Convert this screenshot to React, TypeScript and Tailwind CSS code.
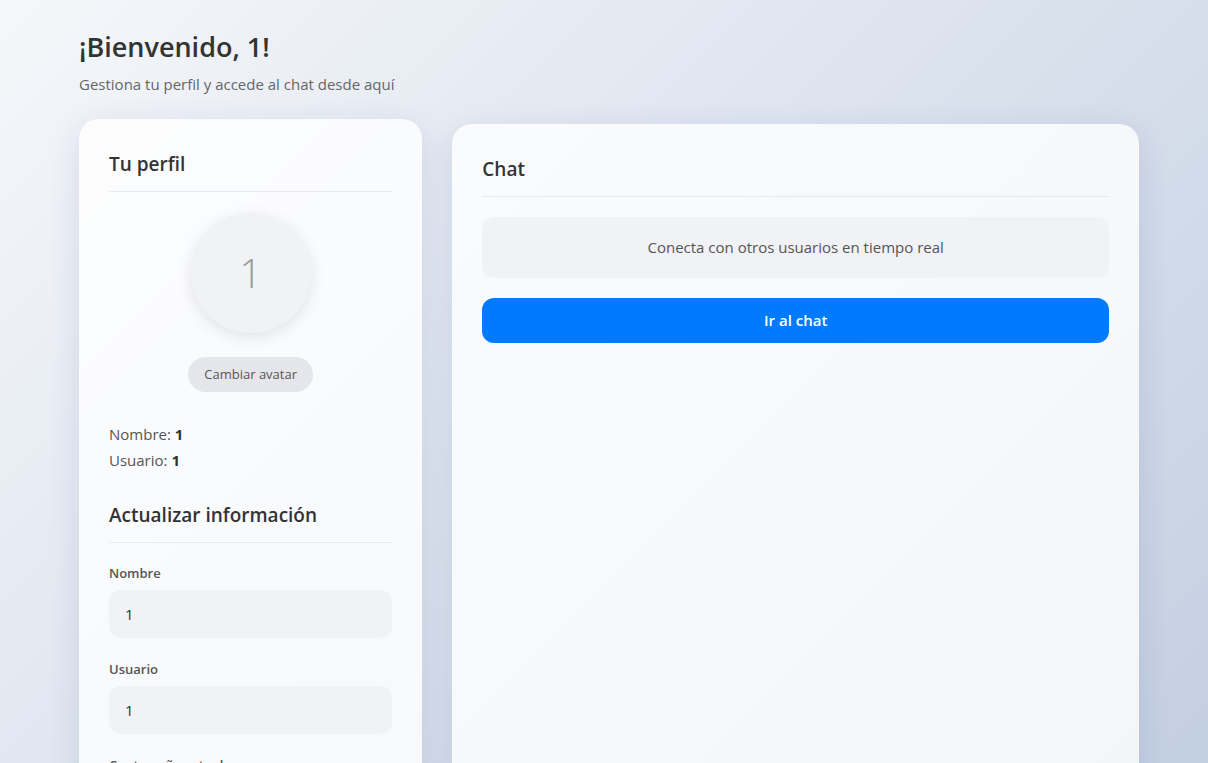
import React, { useState } from 'react';

const font = { fontFamily: '"Open Sans", "Noto Sans", sans-serif' };

function ProfileCard() {
  const [name, setName] = useState('1');
  const [user, setUser] = useState('1');

  return (
    <div className="-translate-y-[5px] rounded-[20px] bg-white/80 p-[30px] shadow-[0_8px_32px_rgba(31,38,135,0.12)]">
      <h2 className="border-b border-[#e8eaee] pb-[13px] pt-[1px] text-[19px] font-semibold leading-[28px] text-[#333]">Tu perfil</h2>

      {/* avatar */}
      <div className="mt-[21px] flex flex-col items-center">
        <div className="flex h-[120px] w-[120px] items-center justify-center rounded-full bg-[#f1f2f4] shadow-[0_4px_15px_rgba(0,0,0,0.1)]">
          <span className="text-[40px] font-light text-[#9a9a9a]">1</span>
        </div>
        <button className="mt-[24px] h-[35px] rounded-full bg-[#e4e6eb] px-[16px] text-[13px] text-[#555]">
          Cambiar avatar
        </button>
      </div>

      <div className="mt-[32px] space-y-[6px] text-[15px] leading-[20px] text-[#555]">
        <p>Nombre: <strong className="font-bold text-[#333]">1</strong></p>
        <p>Usuario: <strong className="font-bold text-[#333]">1</strong></p>
      </div>

      <h2 className="mt-[31px] border-b border-[#e8eaee] pb-[13px] text-[19px] font-semibold leading-[28px] text-[#333]">
        Actualizar información
      </h2>

      <div className="mt-[21px] flex flex-col gap-[22px]">
        <label className="block">
          <span className="block text-[13px] font-semibold leading-[18px] text-[#555]">Nombre</span>
          <input
            value={name}
            onChange={(e) => setName(e.target.value)}
            className="mt-[8px] h-[48px] w-full rounded-[12px] bg-[#f1f2f5] px-[16px] text-[15px] text-[#333] outline-none"
          />
        </label>
        <label className="block">
          <span className="block text-[13px] font-semibold leading-[18px] text-[#555]">Usuario</span>
          <input
            value={user}
            onChange={(e) => setUser(e.target.value)}
            className="mt-[8px] h-[48px] w-full rounded-[12px] bg-[#f1f2f5] px-[16px] text-[15px] text-[#333] outline-none"
          />
        </label>
        <label className="block">
          <span className="block text-[13px] font-semibold leading-[18px] text-[#555]">Contraseña actual</span>
          <input
            type="password"
            className="mt-[8px] h-[48px] w-full rounded-[12px] bg-[#f1f2f5] px-[16px] text-[15px] text-[#333] outline-none"
          />
        </label>
        <label className="block">
          <span className="block text-[13px] font-semibold leading-[18px] text-[#555]">Nueva contraseña</span>
          <input
            type="password"
            className="mt-[8px] h-[48px] w-full rounded-[12px] bg-[#f1f2f5] px-[16px] text-[15px] text-[#333] outline-none"
          />
        </label>
      </div>
    </div>
  );
}

function ChatCard() {
  return (
    <div className="min-h-[700px] rounded-[20px] bg-white/80 p-[30px] shadow-[0_8px_32px_rgba(31,38,135,0.12)]">
      <h2 className="border-b border-[#e8eaee] pb-[13px] pt-[1px] text-[19px] font-semibold leading-[28px] text-[#333]">Chat</h2>
      <div className="mt-[20px] flex h-[61px] items-center justify-center rounded-[12px] bg-[#f1f2f5] text-[15px] text-[#555]">
        Conecta con otros usuarios en tiempo real
      </div>
      <button className="mt-[20px] h-[45px] w-full rounded-[12px] bg-[#007bff] text-[15px] font-semibold text-white">
        Ir al chat
      </button>
    </div>
  );
}

export default function App() {
  return (
    <div style={font} className="min-h-screen bg-fixed bg-[linear-gradient(135deg,#f5f7fa_0%,#c3cfe2_100%)] pl-[79px] pr-[69px] pt-[28px]">
      <header>
        <h1 className="text-[27px] font-semibold leading-[38px] text-[#333]">¡Bienvenido, 1!</h1>
        <p className="mt-[8px] text-[15px] leading-[20px] text-[#666]">Gestiona tu perfil y accede al chat desde aquí</p>
      </header>

      <main className="mt-[30px] grid grid-cols-[1fr_2fr] items-start gap-[30px] pb-[40px]">
        <ProfileCard />
        <ChatCard />
      </main>
    </div>
  );
}
